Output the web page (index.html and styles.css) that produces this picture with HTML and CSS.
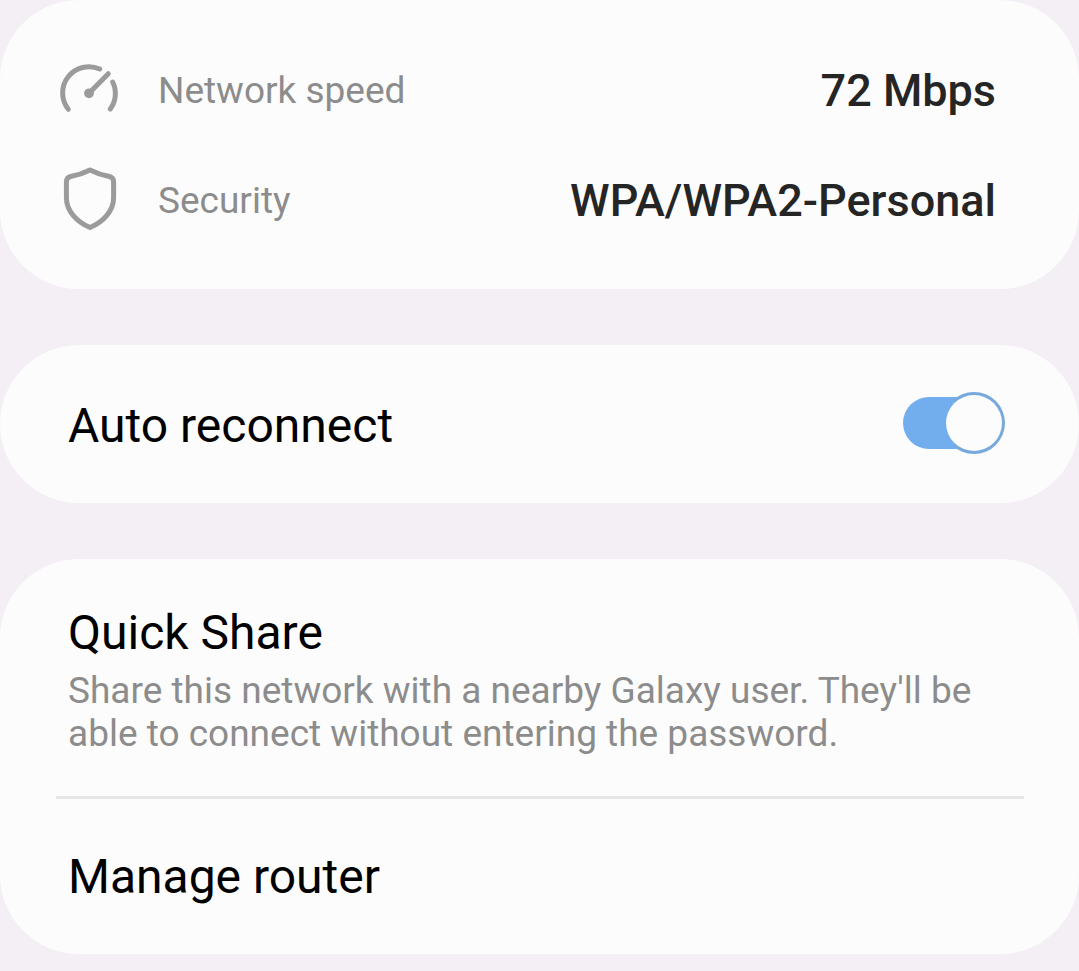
FILE: index.html
```html
<!DOCTYPE html>
<html lang="en">
<head>
<meta charset="utf-8">
<meta name="viewport" content="width=device-width, initial-scale=1">
<title>Network details</title>
<link rel="stylesheet" href="styles.css">
</head>
<body>
<main class="settings">
  <section class="card card-info">
    <dl class="info-list">
      <div class="info-row">
        <svg class="info-icon" viewBox="0 0 64 64" aria-hidden="true">
          <path d="M10.300 51.300A26.300 26.300 0 0 1 41.700 11M54.700 24A26 26 0 0 1 52.300 51"/>
          <path d="M31 35.300L50.300 15.700"/>
          <circle class="hub" cx="31" cy="35.300" r="4.900"/>
        </svg>
        <dt class="info-label">Network speed</dt>
        <dd class="info-value">72 Mbps</dd>
      </div>
      <div class="info-row">
        <svg class="info-icon" viewBox="0 0 64 64" aria-hidden="true">
          <path d="M32 2C38 5 43 7 50.500 8.300Q55.600 9.300 55.600 14V30C55.600 43 45 54 32 59.500C19 54 8.400 43 8.400 30V14Q8.400 9.300 13.500 8.300C21 7 26 5 32 2Z"/>
        </svg>
        <dt class="info-label">Security</dt>
        <dd class="info-value">WPA/WPA2-Personal</dd>
      </div>
    </dl>
  </section>
  <section class="card">
    <label class="row row-toggle" for="auto-reconnect">
      <span class="title">Auto reconnect</span>
      <input class="switch" type="checkbox" role="switch" id="auto-reconnect" checked>
    </label>
  </section>
  <section class="card">
    <button class="row row-share" type="button">
      <span class="title">Quick Share</span>
      <span class="summary">Share this network with a nearby Galaxy user. They'll be able to connect without entering the password.</span>
    </button>
    <hr class="divider">
    <button class="row row-router" type="button"><span class="title">Manage router</span></button>
  </section>
</main>
</body>
</html>
```
FILE: styles.css
```css
* { box-sizing: border-box; }
body {
  margin: 0;
  background: #f3eff5;
  color: #000;
  font-family: Roboto, sans-serif;
}
.settings {
  display: flex;
  flex-direction: column;
  gap: 56px;
  padding-bottom: 17px;
}
.card {
  background: #fcfcfc;
  border-radius: 79px;
}
.card-info { padding: 35px 83px 34px 58px; }
.info-list { margin: 0; }
.info-row {
  display: flex;
  align-items: center;
  height: 110px;
}
.info-icon {
  width: 64px;
  height: 64px;
  margin-right: 36px;
  overflow: visible;
  fill: none;
  stroke: #9b9b9b;
  stroke-width: 5;
  stroke-linecap: round;
  stroke-linejoin: round;
}
.hub { fill: #9b9b9b; stroke: none; }
.info-label {
  color: #8c8c8c;
  font-size: 37px;
}
.info-value {
  margin: 0 0 0 auto;
  color: #252525;
  font-size: 45px;
  font-weight: 500;
}
.row {
  display: flex;
  width: 100%;
  border: 0;
  background: none;
  color: inherit;
  font: inherit;
  text-align: left;
}
.row-toggle {
  align-items: flex-end;
  justify-content: space-between;
  padding: 47px 74px 49px 68px;
}
.title {
  font-size: 48px;
  line-height: 56px;
}
.switch {
  appearance: none;
  position: relative;
  width: 102px;
  height: 62px;
  margin: 0;
}
.switch::before {
  content: "";
  position: absolute;
  inset: 5px 5px 5px 0;
  border-radius: 26px;
  background: #72aeee;
}
.switch::after {
  content: "";
  position: absolute;
  top: 0;
  right: 0;
  width: 62px;
  height: 62px;
  box-sizing: border-box;
  border: 3px solid #78a9dc;
  border-left-color: #72aeee;
  border-radius: 50%;
  background: #fcfcfc;
}
.switch:not(:checked)::before { background: #aaa; }
.switch:not(:checked)::after { right: 40px; border-color: #aaa; }
.row-share {
  flex-direction: column;
  gap: 8px;
  padding: 46px 68px 41px;
}
.summary {
  color: #8c8c8c;
  font-size: 37px;
  line-height: 43px;
}
.divider {
  height: 3px;
  margin: 0 55px 0 56px;
  border: 0;
  background: #e6e6e6;
}
.row-router { padding: 50px 68px 49px; }
```
